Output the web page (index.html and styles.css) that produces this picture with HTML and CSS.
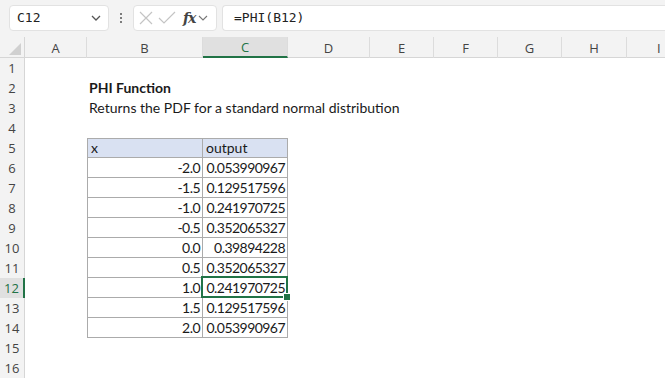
FILE: index.html
```html
<!DOCTYPE html>
<html>
<head>
    <meta charset="UTF-8">
    <meta name="viewport" content="width=device-width, initial-scale=1.0">
    <title>PHI Function</title>
    <link rel="stylesheet" href="styles.css">
</head>
<body>

    <!-- Formula bar -->
    <div class="toolbar">
        <div class="namebox">
            <span>C12</span>
            <svg class="chev" width="12" height="8" viewBox="0 0 12 8"><path d="M2 2l4 4 4-4" fill="none" stroke="#555" stroke-width="1.3"/></svg>
        </div>
        <div class="dots"><i></i><i></i><i></i></div>
        <div class="fxbox">
            <svg width="18" height="18" viewBox="0 0 18 18"><path d="M3 3l12 12M15 3L3 15" stroke="#c4c4c4" stroke-width="1.2"/></svg>
            <svg width="20" height="18" viewBox="0 0 20 18"><path d="M2 9l5 5L18 3" fill="none" stroke="#c4c4c4" stroke-width="1.2"/></svg>
            <span class="fx">fx</span>
            <svg width="12" height="8" viewBox="0 0 12 8"><path d="M2 2l4 4 4-4" fill="none" stroke="#777" stroke-width="1.1"/></svg>
        </div>
        <div class="formula">=PHI(B12)</div>
    </div>

    <!-- Sheet -->
    <div class="sheet">
        <div class="row head">
            <div class="corner"><span></span></div>
            <div class="col">A</div>
            <div class="col">B</div>
            <div class="col active">C</div>
            <div class="col">D</div>
            <div class="col">E</div>
            <div class="col">F</div>
            <div class="col">G</div>
            <div class="col">H</div>
            <div class="col edge">I</div>
        </div>

        <div class="row"><div class="num">1</div></div>
        <div class="row"><div class="num">2</div><div></div><div class="txt bold">PHI Function</div></div>
        <div class="row"><div class="num">3</div><div></div><div class="txt">Returns the PDF for a standard normal distribution</div></div>
        <div class="row"><div class="num">4</div></div>
        <div class="row"><div class="num">5</div><div></div><div class="t first th">x</div><div class="t th top">output</div></div>
        <div class="row"><div class="num">6</div><div></div><div class="t first r">-2.0</div><div class="t r">0.053990967</div></div>
        <div class="row"><div class="num">7</div><div></div><div class="t first r">-1.5</div><div class="t r">0.129517596</div></div>
        <div class="row"><div class="num">8</div><div></div><div class="t first r">-1.0</div><div class="t r">0.241970725</div></div>
        <div class="row"><div class="num">9</div><div></div><div class="t first r">-0.5</div><div class="t r">0.352065327</div></div>
        <div class="row"><div class="num">10</div><div></div><div class="t first r">0.0</div><div class="t r">0.39894228</div></div>
        <div class="row"><div class="num">11</div><div></div><div class="t first r">0.5</div><div class="t r">0.352065327</div></div>
        <div class="row"><div class="num current">12</div><div></div><div class="t first r">1.0</div><div class="t r selected">0.241970725</div></div>
        <div class="row"><div class="num">13</div><div></div><div class="t first r">1.5</div><div class="t r">0.129517596</div></div>
        <div class="row"><div class="num">14</div><div></div><div class="t first r">2.0</div><div class="t r">0.053990967</div></div>
        <div class="row"><div class="num">15</div></div>
        <div class="row"><div class="num">16</div></div>
    </div>

</body>
</html>
```

FILE: styles.css
```css
* {
    margin: 0;
    padding: 0;
    box-sizing: border-box;
}

body {
    width: 665px;
    height: 380px;
    overflow: hidden;
    background: #fff;
    font-family: Lato, "Liberation Sans", sans-serif;
    color: #1a1a1a;
}

/* formula bar */

.toolbar {
    display: flex;
    align-items: center;
    gap: 6px;
    height: 37px;
    padding: 0 0 2px 9px;
    background: #f3f3f3;
}

.namebox,
.fxbox,
.formula {
    height: 26px;
    background: #fff;
    border: 1px solid #e2e2e2;
    border-radius: 4px;
    display: flex;
    align-items: center;
}

.namebox {
    width: 100px;
    justify-content: space-between;
    padding: 0 6px 0 7px;
    font-family: "DejaVu Sans Mono", monospace;
    font-size: 13px;
    color: #222;
}

.dots {
    display: flex;
    flex-direction: column;
    gap: 2px;
    width: 12px;
    align-items: center;
}

.dots i {
    width: 2px;
    height: 2px;
    background: #555;
    border-radius: 1px;
}

.fxbox {
    width: 84px;
    padding: 0 3px 0 3px;
    gap: 2px;
}

.fx {
    font-family: "DejaVu Serif", serif;
    font-style: italic;
    font-weight: bold;
    font-size: 14px;
    color: #444;
    margin-left: 4px;
    letter-spacing: -1px;
}

.formula {
    flex: 1;
    margin-left: -1px;
    border-right: none;
    border-radius: 4px 0 0 4px;
    padding-left: 11px;
    font-family: "DejaVu Sans Mono", monospace;
    font-size: 13px;
    color: #222;
}

/* grid */

.row {
    display: grid;
    grid-template-columns: 25px 62px 116px 85px 82px 64px 64px 64px 65px 1fr;
    height: 20px;
    font-size: 14px;
}

.row.head {
    height: 21px;
    background: #f3f3f3;
    border-bottom: 1px solid #d6d6d6;
    font-family: "Open Sans", sans-serif;
    font-size: 13px;
    color: #444;
}

.corner {
    position: relative;
    border-right: 1px solid #d6d6d6;
}

.corner span {
    position: absolute;
    right: 3px;
    bottom: 3px;
    width: 0;
    height: 0;
    border-left: 12px solid transparent;
    border-bottom: 12px solid #d0d0d0;
}

.col {
    display: flex;
    align-items: center;
    justify-content: center;
    border-right: 1px solid #dcdcdc;
    padding-top: 1px;
}

.col.edge {
    justify-content: flex-start;
    padding-left: 30px;
    border-right: none;
}

.col.active {
    background: #e0e0e0;
    color: #217346;
    border-bottom: 2px solid #217346;
}

.num {
    display: flex;
    align-items: center;
    justify-content: center;
    background: #f3f3f3;
    border-right: 1px solid #d6d6d6;
    font-family: "Open Sans", sans-serif;
    font-size: 13px;
    color: #444;
}

.num.current {
    background: #e0e0e0;
    color: #217346;
    border-right: 2px solid #217346;
}

.txt {
    white-space: nowrap;
    padding: 1px 0 0 2px;
    line-height: 18px;
}

.bold {
    font-weight: bold;
}

/* table B5:C14 */

.t {
    border-right: 1px solid #ababab;
    border-bottom: 1px solid #ababab;
    line-height: 19px;
    padding: 0 2px 0 3px;
    white-space: nowrap;
}

.t.first {
    border-left: 1px solid #ababab;
}

.t.th {
    background: #d9e1f2;
    border-top: 1px solid #ababab;
    line-height: 18px;
}

.r {
    text-align: right;
    letter-spacing: -0.55px;
}

.selected {
    position: relative;
}

.selected::after {
    content: "";
    position: absolute;
    left: -2px;
    top: -2px;
    right: -1px;
    bottom: -1px;
    border: 2px solid #217346;
}

.selected::before {
    content: "";
    position: absolute;
    right: -4px;
    bottom: -4px;
    width: 6px;
    height: 6px;
    background: #217346;
    border: 1px solid #fff;
    z-index: 1;
}
```
